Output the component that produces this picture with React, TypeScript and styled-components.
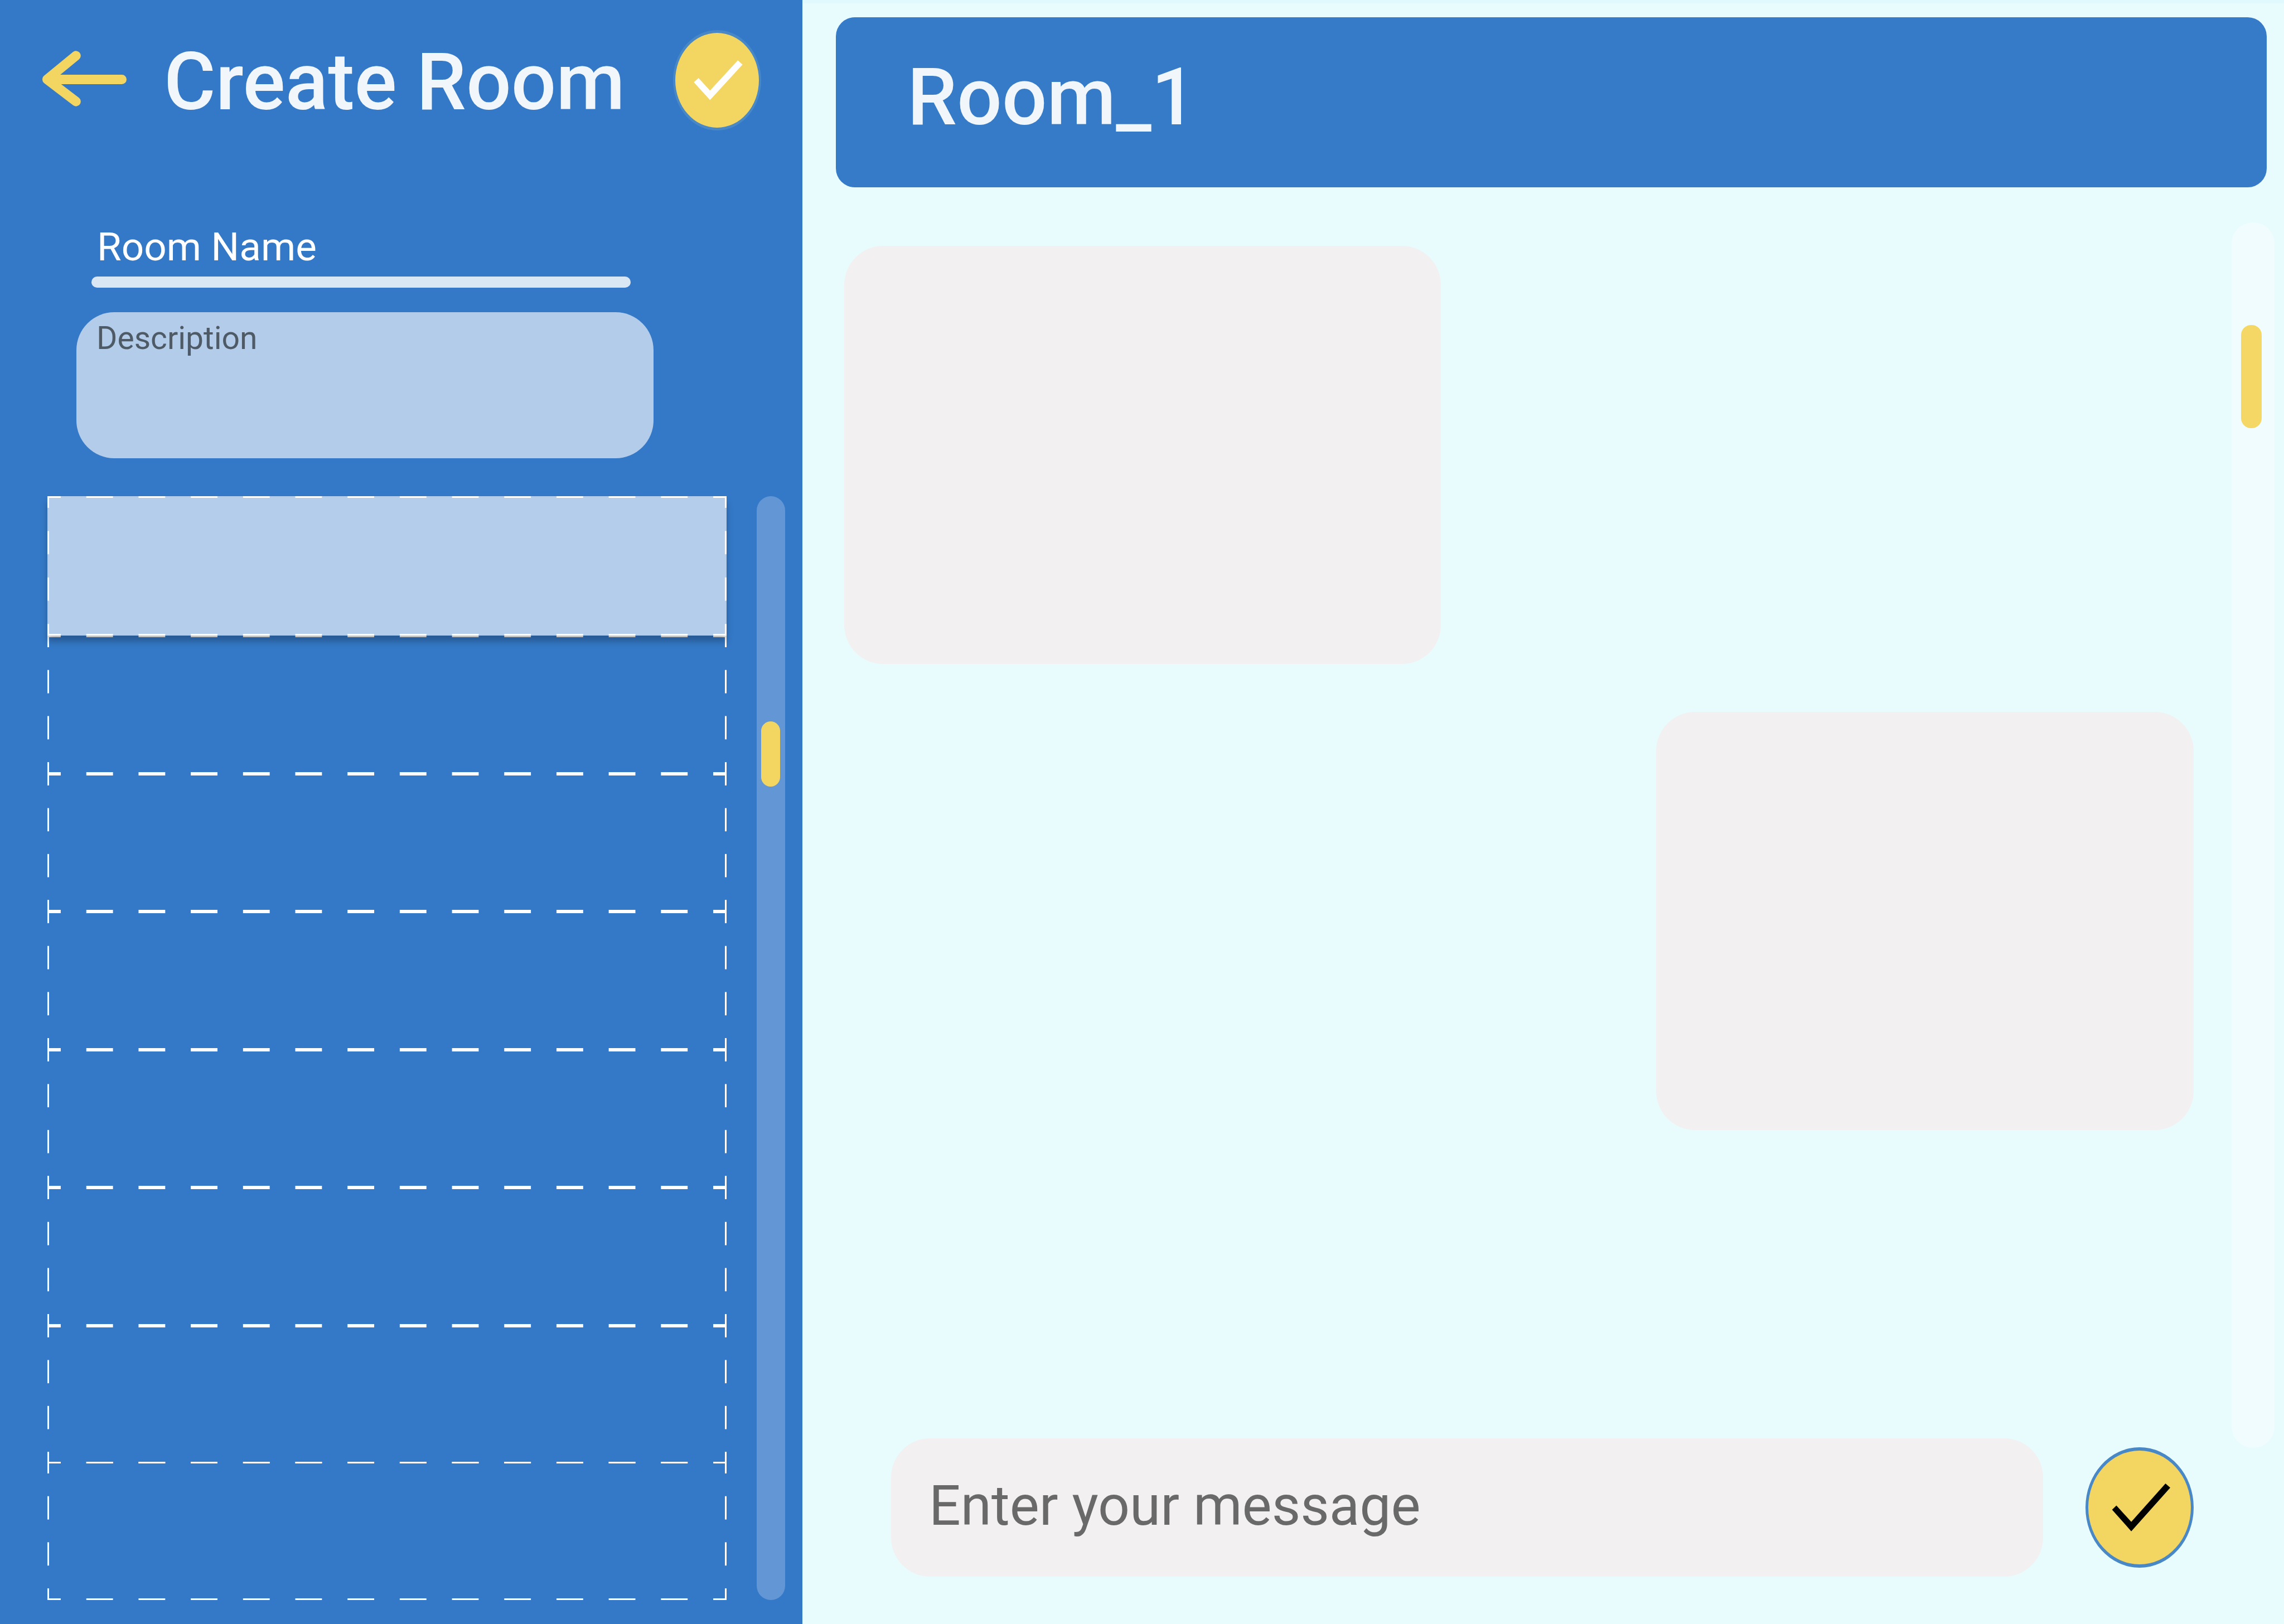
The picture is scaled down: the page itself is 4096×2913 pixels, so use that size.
import React from "react";
import styled, { createGlobalStyle, css } from "styled-components";

const color = {
  blue: "#3479c7",
  headerBlue: "#367bc8",
  mist: "#e8fcfe",
  mistEdge: "#dff9ff",
  paleBlue: "#b3cce9",
  selected: "#b4cdea",
  track: "#6296d4",
  yellow: "#f3d562",
  ring: "#4988c7",
  bubble: "#f2f0f1",
  title: "#f1f6fb",
};

const GlobalStyle = createGlobalStyle`
  *, *::before, *::after { box-sizing: border-box; }
  body {
    margin: 0;
    font-family: Roboto, "Liberation Sans", sans-serif;
    background: ${color.mist};
  }
`;

const Page = styled.div`
  display: grid;
  grid-template-columns: 1439px 1fr;
  min-height: 100vh;
`;

const Sidebar = styled.aside`
  display: flex;
  flex-direction: column;
  padding-bottom: 43px;
  background: ${color.blue};
`;

const SidebarHeader = styled.header`
  display: flex;
  align-items: center;
  padding: 54px 74px 0 76px;
`;

const titleText = css`
  margin: 0;
  font-size: 142px;
  font-weight: 500;
  line-height: 168px;
  color: ${color.title};
`;

const SidebarTitle = styled.h1`
  ${titleText}
  margin-left: 67px;
  padding-top: 8px;
  white-space: nowrap;
`;

const IconButton = styled.button`
  display: flex;
  padding: 0;
  border: 0;
  background: none;
  cursor: pointer;
`;

const BackButton = styled(IconButton)`
  padding-bottom: 6px;
`;

const OvalButton = styled(IconButton)<{ $large?: boolean }>`
  flex: none;
  align-items: center;
  justify-content: center;
  width: ${(p) => (p.$large ? 194 : 158)}px;
  height: ${(p) => (p.$large ? 216 : 180)}px;
  margin-left: auto;
  border: solid ${color.ring};
  border-width: ${(p) => (p.$large ? "6px 5px" : "5px 4px")};
  border-radius: 50%;
  background: ${color.yellow};
`;

const RoomForm = styled.form`
  display: flex;
  flex-direction: column;
  padding-top: 154px;
`;

const NameField = styled.div`
  display: flex;
  flex-direction: column;
  margin: 0 308px 0 164px;
`;

const NameInput = styled.input`
  width: 100%;
  height: 108px;
  padding: 0 10px;
  border: 0;
  outline: 0;
  background: none;
  font: 400 71px / 84px Roboto, "Liberation Sans", sans-serif;
  color: #fff;

  &::placeholder {
    color: #fff;
    opacity: 1;
  }
`;

const Underline = styled.span`
  height: 20px;
  border-radius: 10px;
  background: #d9e6f4;
`;

const DescriptionInput = styled.textarea`
  height: 262px;
  margin: 44px 267px 0 137px;
  padding: 13px 36px;
  border: 0;
  border-radius: 68px;
  outline: 0;
  resize: none;
  background: ${color.paleBlue};
  font: 400 57px / 67px Roboto, "Liberation Sans", sans-serif;
  color: #4e5b67;

  &::placeholder {
    color: #4e5b67;
    opacity: 1;
  }
`;

const RoomBrowser = styled.div`
  display: flex;
  flex: 1;
  gap: 54px;
  padding: 68px 31px 0 85px;
`;

const RoomList = styled.ul`
  display: grid;
  flex: 1;
  grid-template-rows: 250px repeat(7, minmax(120px, 1fr));
  margin: 0 0 -3px;
  padding: 0;
  list-style: none;
`;

const dashX = "linear-gradient(90deg, #fff 25%, transparent 25% 75%, #fff 75%)";
const dashY = "linear-gradient(#fff 25%, transparent 25% 75%, #fff 75%)";

/* Long dashes that always meet in a solid corner, whatever the row's size. */
const RoomRow = styled.li<{ $selected?: boolean }>`
  background-image: ${dashX}, ${dashX}, ${dashY}, ${dashY};
  background-position: left top, left bottom, left top, right top;
  background-size: 94px 3px, 94px 3px, 3px 83px, 3px 83px;
  background-repeat: round no-repeat, round no-repeat, no-repeat round, no-repeat round;

  /* The last row shares its top line with the row above. */
  &:last-child {
    margin: -3px 0 3px;
  }

  ${(p) =>
    p.$selected &&
    css`
      position: relative;
      z-index: 1;
      background-color: ${color.selected};
      box-shadow: 0 11px 11px rgba(0, 0, 0, 0.25);
    `}
`;

const RoomTrack = styled.div`
  width: 51px;
  padding: 404px 9px 0 8px;
  border-radius: 26px;
  background: ${color.track};
`;

const RoomThumb = styled.div`
  height: 117px;
  border-radius: 17px;
  background: ${color.yellow};
`;

const Main = styled.main`
  display: flex;
  flex-direction: column;
  min-width: 0;
  border-top: 6px solid ${color.mistEdge};
  background: ${color.mist};
`;

const RoomHeader = styled.header`
  display: flex;
  align-items: center;
  height: 305px;
  margin: 25px 31px 0 60px;
  padding: 0 128px 18px;
  border-radius: 34px;
  background: ${color.headerBlue};
`;

const RoomTitle = styled.h2`
  ${titleText}
`;

const Conversation = styled.div`
  display: grid;
  flex: 1;
  grid-template-columns: 1fr 77px;
  gap: 68px;
  padding: 63px 17px 0 0;
`;

const ConversationColumn = styled.div`
  display: flex;
  flex-direction: column;
  min-width: 0;
  padding-bottom: 85px;
`;

const Messages = styled.div`
  display: flex;
  flex-direction: column;
  gap: 86px;
  padding: 42px 0 86px 75px;
`;

const Bubble = styled.article<{ $own?: boolean }>`
  align-self: ${(p) => (p.$own ? "flex-end" : "flex-start")};
  width: ${(p) => (p.$own ? 964 : 1070)}px;
  max-width: 100%;
  height: 750px;
  border-radius: 70px;
  background: ${color.bubble};
`;

const Composer = styled.form`
  display: flex;
  align-items: center;
  gap: 76px;
  margin-top: auto;
  padding-left: 159px;
`;

const MessageInput = styled.input`
  flex: 1;
  min-width: 0;
  height: 248px;
  padding: 0 68px 8px;
  border: 0;
  border-radius: 70px;
  outline: 0;
  background: ${color.bubble};
  font: 400 100px / 118px Roboto, "Liberation Sans", sans-serif;
  color: #696969;

  &::placeholder {
    color: #696969;
    opacity: 1;
  }
`;

const ChatTrack = styled.div`
  margin-bottom: 316px;
  padding: 184px 23px 0 17px;
  border-radius: 38px;
  background: #f1fcfe;
`;

const ChatThumb = styled.div`
  height: 185px;
  border-radius: 18px;
  background: #f5d765;
`;

function BackArrow() {
  return (
    <svg width="151" height="100" viewBox="0 0 213 140" fill="none" aria-hidden="true">
      <path
        d="M201 72H12L85 12M12 72L85 128"
        stroke={color.yellow}
        strokeWidth="24"
        strokeLinecap="round"
        strokeLinejoin="round"
      />
    </svg>
  );
}

function SmallCheck() {
  return (
    <svg width="92" height="72" viewBox="-6 0 130 101" aria-hidden="true">
      <path d="M0 55.5L12 45L41 76.5L111.5 0L123.5 10.5L41 100.5Z" fill="#fff" />
    </svg>
  );
}

function LargeCheck() {
  return (
    <svg width="110" height="86" viewBox="-8 0 155 121" aria-hidden="true">
      <path d="M0 66.3L11 55.7L48.5 96.7L135 0L147 10.6L48.5 120.6Z" fill="#000" />
    </svg>
  );
}

const rooms = [1, 2, 3, 4, 5, 6, 7, 8];

export default function App() {
  return (
    <>
      <GlobalStyle />
      <Page>
        <Sidebar>
          <SidebarHeader>
            <BackButton type="button" aria-label="Back">
              <BackArrow />
            </BackButton>
            <SidebarTitle>Create Room</SidebarTitle>
            <OvalButton type="submit" form="room-form" aria-label="Create room">
              <SmallCheck />
            </OvalButton>
          </SidebarHeader>

          <RoomForm id="room-form" onSubmit={(e) => e.preventDefault()}>
            <NameField>
              <NameInput type="text" placeholder="Room Name" aria-label="Room Name" />
              <Underline />
            </NameField>
            <DescriptionInput placeholder="Description" aria-label="Description" />
          </RoomForm>

          <RoomBrowser>
            <RoomList>
              {rooms.map((id) => (
                <RoomRow key={id} $selected={id === 1} />
              ))}
            </RoomList>
            <RoomTrack>
              <RoomThumb />
            </RoomTrack>
          </RoomBrowser>
        </Sidebar>

        <Main>
          <RoomHeader>
            <RoomTitle>Room_1</RoomTitle>
          </RoomHeader>
          <Conversation>
            <ConversationColumn>
              <Messages>
                <Bubble />
                <Bubble $own />
              </Messages>
              <Composer onSubmit={(e) => e.preventDefault()}>
                <MessageInput
                  type="text"
                  placeholder="Enter your message"
                  aria-label="Enter your message"
                />
                <OvalButton type="submit" $large aria-label="Send">
                  <LargeCheck />
                </OvalButton>
              </Composer>
            </ConversationColumn>
            <ChatTrack>
              <ChatThumb />
            </ChatTrack>
          </Conversation>
        </Main>
      </Page>
    </>
  );
}
